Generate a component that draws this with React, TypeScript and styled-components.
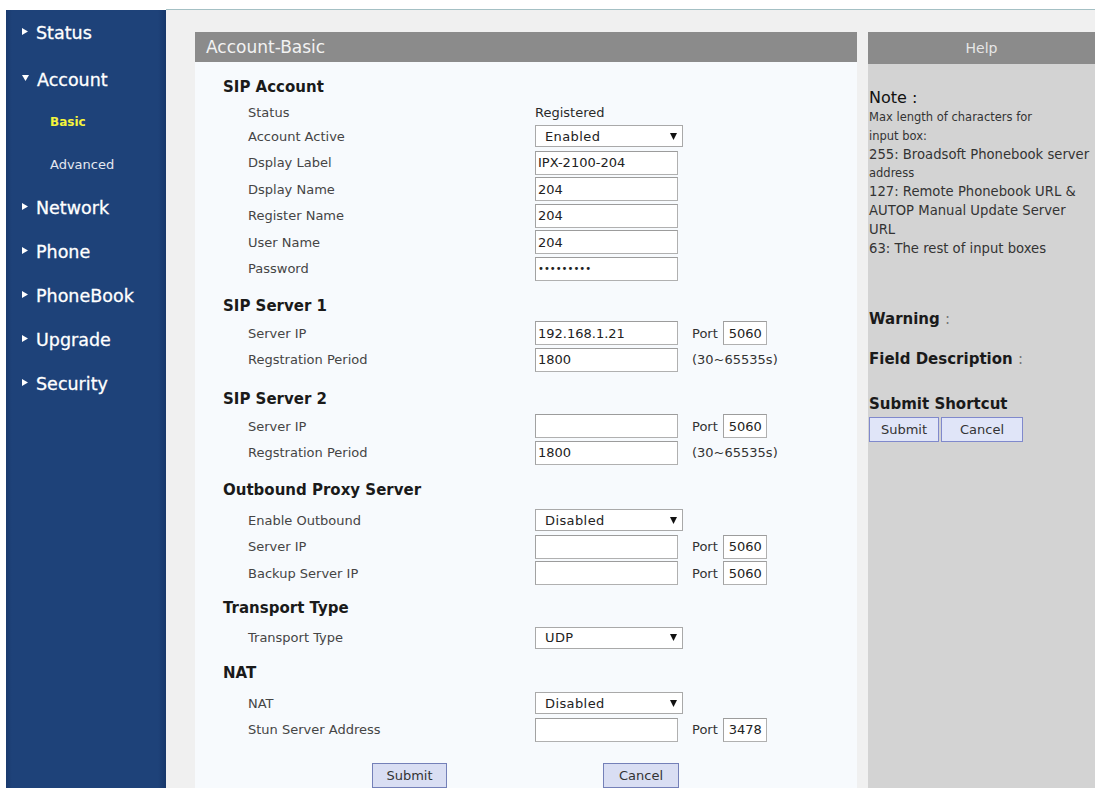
import React from 'react';
import styled, { createGlobalStyle } from 'styled-components';

const GlobalStyle = createGlobalStyle`
  html, body {
    margin: 0;
    padding: 0;
    background: #ffffff;
  }
  body {
    font-family: 'DejaVu Sans', Verdana, sans-serif;
    color: #222;
  }
`;

const Page = styled.div`
  display: flex;
  height: 779px;
  padding: 9px 0 0 6px;
`;

const Sidebar = styled.nav`
  width: 160px;
  flex: none;
  margin-top: 1px;
  padding-top: 1px;
  box-sizing: border-box;
  background: linear-gradient(to right, #1a3a6e 0, #1e4279 6px, #1e4279 152px, #17376a 160px);
`;

const MenuItem = styled.div<{ $top?: number }>`
  height: 44px;
  margin-top: ${(p) => p.$top ?? 0}px;
  display: flex;
  align-items: center;
  padding-left: 16px;
  gap: 8px;
  color: #ffffff;
  font-size: 17.5px;
  -webkit-text-stroke: 0.3px #ffffff;

  svg {
    margin-bottom: 4px;
  }
`;

const SubItem = styled.div<{ $active?: boolean }>`
  height: ${(p) => (p.$active ? 40 : 44)}px;
  display: flex;
  align-items: center;
  padding-left: 44px;
  color: ${(p) => (p.$active ? '#f4f43c' : '#e4e8f0')};
  font-size: ${(p) => (p.$active ? 12 : 13)}px;
  font-weight: ${(p) => (p.$active ? 700 : 400)};
`;

const Main = styled.main`
  flex: 1;
  min-width: 0;
  display: flex;
  gap: 11px;
  background: #f0f0f0;
  border-top: 1px solid #a4c0c4;
  padding: 22px 0 0 29px;
`;

const FormPanel = styled.section`
  width: 662px;
  flex: none;
  display: flex;
  flex-direction: column;
  background: #f7fafd;
`;

const PanelHeader = styled.div`
  height: 30px;
  display: flex;
  align-items: center;
  padding-left: 11px;
  background: #8b8b8b;
  color: #f2f2f2;
  font-size: 17px;
`;

const FormBody = styled.div`
  padding-top: 11px;
`;

const Section = styled.div<{ $gap?: number }>`
  margin-top: ${(p) => p.$gap ?? 0}px;
`;

const SectionTitle = styled.div<{ $after?: number }>`
  height: 28px;
  margin-bottom: ${(p) => p.$after ?? 0}px;
  display: flex;
  align-items: center;
  padding-left: 28px;
  font-size: 15px;
  font-weight: 700;
  color: #1a1a1a;
`;

const Row = styled.div<{ $h?: number }>`
  height: ${(p) => p.$h ?? 26.5}px;
  display: grid;
  grid-template-columns: 287px auto;
  align-items: center;
  padding-left: 53px;
`;

const Label = styled.span`
  font-size: 13px;
  color: #454545;
`;

const Field = styled.div`
  display: flex;
  align-items: center;
`;

const Value = styled.span`
  font-size: 13px;
  color: #2a2a2a;
`;

const TextInput = styled.input<{ $w?: number; $pad?: number }>`
  width: ${(p) => p.$w ?? 143}px;
  height: 24px;
  box-sizing: border-box;
  margin: 0;
  padding: 0 2px 0 ${(p) => p.$pad ?? 2}px;
  border: 1px solid #b0b0b0;
  border-top-color: #9c9c9c;
  border-left-color: #a2a2a2;
  background: #ffffff;
  font-family: 'DejaVu Sans', Verdana, sans-serif;
  font-size: 13px;
  color: #222;
  outline: none;
`;

const PasswordInput = styled(TextInput)`
  font-size: 10px;
  letter-spacing: 0;
`;

const SelectBox = styled.div`
  width: 148px;
  height: 22px;
  box-sizing: border-box;
  border: 1px solid #a9a9a9;
  background: #ffffff;
  display: flex;
  align-items: center;
  justify-content: space-between;
  padding: 0 5px 0 9px;
  font-size: 13px;
  letter-spacing: 0.4px;
  color: #222;
`;

const PortLabel = styled.span`
  margin-left: 14px;
  margin-right: 5px;
  font-size: 13px;
  color: #333;
`;

const Hint = styled.span`
  margin-left: 14px;
  font-size: 13px;
  color: #333;
`;

const ButtonRow = styled.div`
  display: flex;
  gap: 156px;
  padding-left: 177px;
  margin-top: 20px;
`;

const Button = styled.button<{ $w: number; $light?: boolean }>`
  width: ${(p) => p.$w}px;
  height: 25px;
  box-sizing: border-box;
  margin: 0;
  padding: 0;
  border: 1px solid ${(p) => (p.$light ? '#8089cc' : '#7480b8')};
  background: ${(p) => (p.$light ? '#e0e5f8' : '#d9def3')};
  font-family: 'DejaVu Sans', Verdana, sans-serif;
  font-size: 13px;
  color: #333;
`;

const HelpPanel = styled.aside`
  width: 227px;
  flex: none;
  display: flex;
  flex-direction: column;
  background: #d3d3d3;
`;

const HelpHeader = styled.div`
  height: 32px;
  display: flex;
  align-items: center;
  justify-content: center;
  background: #8b8b8b;
  color: #e6e6e6;
  font-size: 14px;
`;

const HelpBody = styled.div`
  padding: 24px 0 0 1px;
`;

const NoteTitle = styled.div`
  font-size: 16px;
  line-height: 20px;
  color: #111;
`;

const HelpText = styled.div<{ $small?: boolean }>`
  font-size: ${(p) => (p.$small ? 11.5 : 13.2)}px;
  line-height: 18.8px;
  color: #333;
  white-space: nowrap;
`;

const HelpHeading = styled.div<{ $gap: number }>`
  margin-top: ${(p) => p.$gap}px;
  font-size: 15px;
  line-height: 22px;
  font-weight: 700;
  color: #1a1a1a;
  white-space: nowrap;
`;

const Colon = styled.span`
  font-weight: 400;
  color: #777;
`;

const ShortcutButtons = styled.div`
  display: flex;
  gap: 2px;
  margin-top: 2px;
`;

const Caret = ({ open }: { open?: boolean }) =>
  open ? (
    <svg width="7" height="6" viewBox="0 0 7 6">
      <polygon points="0,0 7,0 3.5,6" fill="#fff" />
    </svg>
  ) : (
    <svg width="6" height="7" viewBox="0 0 6 7">
      <polygon points="0,0 6,3.5 0,7" fill="#fff" />
    </svg>
  );

const Arrow = () => (
  <svg width="7" height="7" viewBox="0 0 7 7">
    <polygon points="0,0 7,0 3.5,7" fill="#111" />
  </svg>
);

const Select = ({ value }: { value: string }) => (
  <SelectBox>
    <span>{value}</span>
    <Arrow />
  </SelectBox>
);

const Port = ({ value }: { value: string }) => (
  <>
    <PortLabel>Port</PortLabel>
    <TextInput $w={44} $pad={5} defaultValue={value} readOnly />
  </>
);

const menu = ['Network', 'Phone', 'PhoneBook', 'Upgrade', 'Security'];
const noteLines: [string, boolean][] = [
  ['Max length of characters for', true],
  ['input box:', true],
  ['255: Broadsoft Phonebook server', false],
  ['address', true],
  ['127: Remote Phonebook URL &', false],
  ['AUTOP Manual Update Server', false],
  ['URL', false],
  ['63: The rest of input boxes', false],
];

export default function App() {
  return (
    <>
      <GlobalStyle />
      <Page>
        <Sidebar>
          <MenuItem>
            <Caret />
            Status
          </MenuItem>
          <MenuItem $top={3}>
            <Caret open />
            Account
          </MenuItem>
          <SubItem $active>Basic</SubItem>
          <SubItem>Advanced</SubItem>
          {menu.map((m) => (
            <MenuItem key={m}>
              <Caret />
              {m}
            </MenuItem>
          ))}
        </Sidebar>
        <Main>
          <FormPanel>
            <PanelHeader>Account-Basic</PanelHeader>
            <FormBody>
              <Section>
                <SectionTitle $after={1}>SIP Account</SectionTitle>
                <Row $h={21}>
                  <Label>Status</Label>
                  <Value>Registered</Value>
                </Row>
                <Row>
                  <Label>Account Active</Label>
                  <Field>
                    <Select value="Enabled" />
                  </Field>
                </Row>
                <Row>
                  <Label>Dsplay Label</Label>
                  <Field>
                    <TextInput defaultValue="IPX-2100-204" readOnly />
                  </Field>
                </Row>
                <Row>
                  <Label>Dsplay Name</Label>
                  <Field>
                    <TextInput defaultValue="204" readOnly />
                  </Field>
                </Row>
                <Row>
                  <Label>Register Name</Label>
                  <Field>
                    <TextInput defaultValue="204" readOnly />
                  </Field>
                </Row>
                <Row>
                  <Label>User Name</Label>
                  <Field>
                    <TextInput defaultValue="204" readOnly />
                  </Field>
                </Row>
                <Row>
                  <Label>Password</Label>
                  <Field>
                    <PasswordInput type="password" defaultValue="123456789" readOnly />
                  </Field>
                </Row>
              </Section>

              <Section $gap={10}>
                <SectionTitle>SIP Server 1</SectionTitle>
                <Row>
                  <Label>Server IP</Label>
                  <Field>
                    <TextInput defaultValue="192.168.1.21" readOnly />
                    <Port value="5060" />
                  </Field>
                </Row>
                <Row>
                  <Label>Regstration Period</Label>
                  <Field>
                    <TextInput defaultValue="1800" readOnly />
                    <Hint>(30~65535s)</Hint>
                  </Field>
                </Row>
              </Section>

              <Section $gap={12}>
                <SectionTitle>SIP Server 2</SectionTitle>
                <Row>
                  <Label>Server IP</Label>
                  <Field>
                    <TextInput defaultValue="" readOnly />
                    <Port value="5060" />
                  </Field>
                </Row>
                <Row>
                  <Label>Regstration Period</Label>
                  <Field>
                    <TextInput defaultValue="1800" readOnly />
                    <Hint>(30~65535s)</Hint>
                  </Field>
                </Row>
              </Section>

              <Section $gap={10}>
                <SectionTitle $after={3}>Outbound Proxy Server</SectionTitle>
                <Row>
                  <Label>Enable Outbound</Label>
                  <Field>
                    <Select value="Disabled" />
                  </Field>
                </Row>
                <Row>
                  <Label>Server IP</Label>
                  <Field>
                    <TextInput defaultValue="" readOnly />
                    <Port value="5060" />
                  </Field>
                </Row>
                <Row>
                  <Label>Backup Server IP</Label>
                  <Field>
                    <TextInput defaultValue="" readOnly />
                    <Port value="5060" />
                  </Field>
                </Row>
              </Section>

              <Section $gap={7}>
                <SectionTitle $after={3}>Transport Type</SectionTitle>
                <Row>
                  <Label>Transport Type</Label>
                  <Field>
                    <Select value="UDP" />
                  </Field>
                </Row>
              </Section>

              <Section $gap={8}>
                <SectionTitle $after={3}>NAT</SectionTitle>
                <Row>
                  <Label>NAT</Label>
                  <Field>
                    <Select value="Disabled" />
                  </Field>
                </Row>
                <Row>
                  <Label>Stun Server Address</Label>
                  <Field>
                    <TextInput defaultValue="" readOnly />
                    <Port value="3478" />
                  </Field>
                </Row>
              </Section>

              <ButtonRow>
                <Button $w={75}>Submit</Button>
                <Button $w={76}>Cancel</Button>
              </ButtonRow>
            </FormBody>
          </FormPanel>

          <HelpPanel>
            <HelpHeader>Help</HelpHeader>
            <HelpBody>
              <NoteTitle>Note :</NoteTitle>
              {noteLines.map(([line, small]) => (
                <HelpText key={line} $small={small}>
                  {line}
                </HelpText>
              ))}
              <HelpHeading $gap={50}>
                Warning <Colon>:</Colon>
              </HelpHeading>
              <HelpHeading $gap={18}>
                Field Description <Colon>:</Colon>
              </HelpHeading>
              <HelpHeading $gap={23}>Submit Shortcut</HelpHeading>
              <ShortcutButtons>
                <Button $w={70} $light>
                  Submit
                </Button>
                <Button $w={82} $light>
                  Cancel
                </Button>
              </ShortcutButtons>
            </HelpBody>
          </HelpPanel>
        </Main>
      </Page>
    </>
  );
}
